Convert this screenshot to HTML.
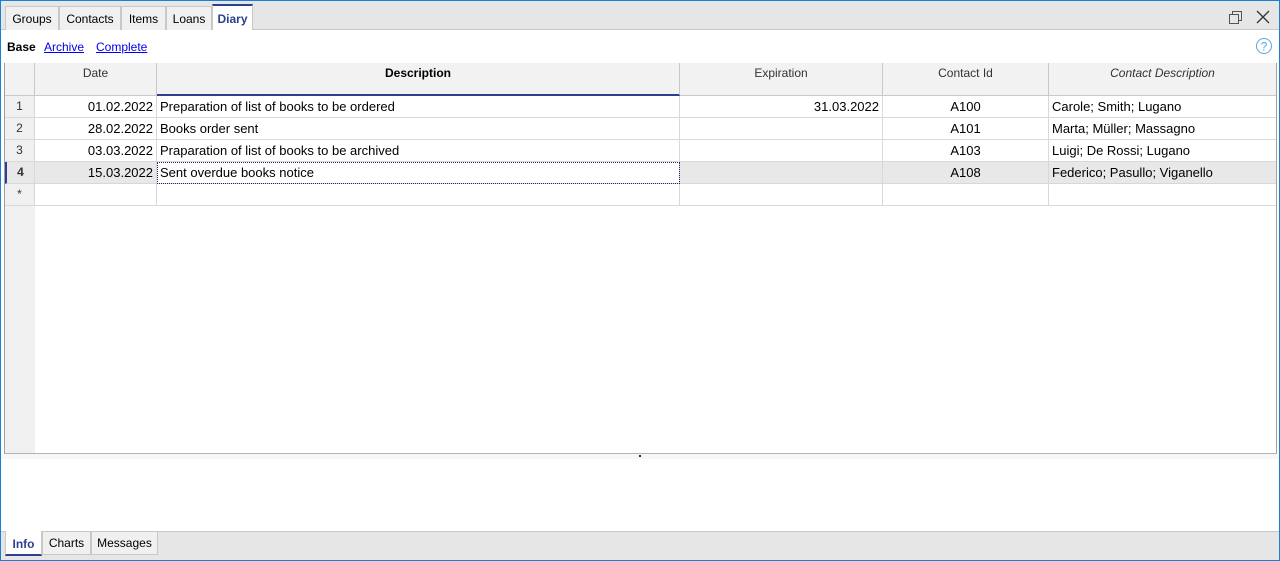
<!DOCTYPE html>
<html><head><meta charset="utf-8"><style>
*{margin:0;padding:0;box-sizing:border-box}
body{width:1280px;height:561px;overflow:hidden;background:#fff;font-family:"Liberation Sans",Arial,sans-serif;font-size:12px;color:#000;position:relative}
.a{position:absolute}
.frame{left:0;top:0;width:1280px;height:561px;border:1px solid #1a7fd6}
.tabbar{left:1px;top:1px;width:1278px;height:29px;background:#e6e6e6;border-bottom:1px solid #c8c8c8}
.tab{top:6px;height:24px;background:#f0f0f0;border:1px solid #c8c8c8;border-bottom:none;text-align:center;line-height:24px;font-size:12px}
.tab.act{background:#fff;top:4px;height:26px;border-top:2px solid #2e3f8f;color:#2e3f8f;font-weight:bold;line-height:26px}
.link{top:40px;color:#0000ee;text-decoration:underline}
.grid{left:4px;top:63px;width:1273px;height:391px;border:1px solid #a0a0a0;border-bottom:1px solid #b4b4b4}
.hd{top:63px;height:33px;background:#f2f2f2;border-right:1px solid #c8c8c8;border-bottom:1px solid #c8c8c8;text-align:center;padding-top:3px;color:#333}
.c{height:22px;line-height:21px;border-right:1px solid #d8d8d8;border-bottom:1px solid #d8d8d8;padding:0 3px;white-space:nowrap;overflow:hidden;font-size:13px}
.r{text-align:right}.m{text-align:center}
.num{background:#f0f0f0;text-align:center;color:#333;font-size:12px}
.btab{top:531px;height:24px;background:#f0f0f0;border:1px solid #c8c8c8;text-align:center;line-height:22px}
</style></head><body>
<div class="a tabbar"></div>
<div class="a tab" style="left:5px;width:54px">Groups</div>
<div class="a tab" style="left:59px;width:62px">Contacts</div>
<div class="a tab" style="left:121px;width:45px">Items</div>
<div class="a tab" style="left:166px;width:46px">Loans</div>
<div class="a tab act" style="left:212px;width:41px">Diary</div>
<svg class="a" style="left:1228px;top:10px" width="16" height="16"><rect x="4.5" y="1.5" width="9" height="9" fill="none" stroke="#555"/><rect x="1.5" y="4.5" width="9" height="9" fill="#e6e6e6" stroke="#555"/></svg>
<svg class="a" style="left:1256px;top:10px" width="14" height="14"><path d="M1 1L13 13M13 1L1 13" stroke="#333" stroke-width="1.3"/></svg>
<div class="a" style="left:7px;top:40px;font-weight:bold">Base</div>
<div class="a link" style="left:44px">Archive</div>
<div class="a link" style="left:96px">Complete</div>
<svg class="a" style="left:1255px;top:37px" width="18" height="18"><circle cx="9" cy="9" r="7.5" fill="none" stroke="#5aa6e0"/><text x="9" y="13.5" font-size="12" text-anchor="middle" fill="#5aa6e0" font-family="Liberation Sans">?</text></svg>

<div class="a grid"></div>
<div class="a" style="left:5px;top:96px;width:30px;height:357px;background:#f0f0f0"></div>
<div class="a hd" style="left:5px;width:30px"></div>
<div class="a hd" style="left:35px;width:122px">Date</div>
<div class="a hd" style="left:157px;width:523px;font-weight:bold;border-bottom:2px solid #2e3f8f;color:#000">Description</div>
<div class="a hd" style="left:680px;width:203px">Expiration</div>
<div class="a hd" style="left:883px;width:166px">Contact Id</div>
<div class="a hd" style="left:1049px;width:227px;font-style:italic;border-right:none">Contact Description</div>

<div class="a" style="left:5px;top:96px">
<div style="display:flex"><div class="c num" style="width:30px">1</div><div class="c r" style="width:122px">01.02.2022</div><div class="c" style="width:523px">Preparation of list of books to be ordered</div><div class="c r" style="width:203px">31.03.2022</div><div class="c m" style="width:166px">A100</div><div class="c" style="width:227px;border-right:none">Carole; Smith; Lugano</div></div>
<div style="display:flex"><div class="c num" style="width:30px">2</div><div class="c r" style="width:122px">28.02.2022</div><div class="c" style="width:523px">Books order sent</div><div class="c r" style="width:203px"></div><div class="c m" style="width:166px">A101</div><div class="c" style="width:227px;border-right:none">Marta; Müller; Massagno</div></div>
<div style="display:flex"><div class="c num" style="width:30px">3</div><div class="c r" style="width:122px">03.03.2022</div><div class="c" style="width:523px">Praparation of list of books to be archived</div><div class="c r" style="width:203px"></div><div class="c m" style="width:166px">A103</div><div class="c" style="width:227px;border-right:none">Luigi; De Rossi; Lugano</div></div>
<div style="display:flex;background:#e8e8e8"><div class="c num" style="width:30px;font-weight:bold;border-left:2px solid #2e3f8f;background:#e8e8e8">4</div><div class="c r" style="width:122px">15.03.2022</div><div class="c" style="width:523px;background:#fff;outline:1px dotted #1a2a6a;outline-offset:-1px">Sent overdue books notice</div><div class="c r" style="width:203px"></div><div class="c m" style="width:166px">A108</div><div class="c" style="width:227px;border-right:none">Federico; Pasullo; Viganello</div></div>
<div style="display:flex;background:#fff"><div class="c num" style="width:30px">*</div><div class="c" style="width:122px"></div><div class="c" style="width:523px"></div><div class="c" style="width:203px"></div><div class="c" style="width:166px"></div><div class="c" style="width:227px;border-right:none"></div></div>
</div>
<div class="a" style="left:1px;top:454px;width:1278px;height:5px;background:#f7f7f7"></div>
<div class="a" style="left:639px;top:455px;width:2px;height:2px;background:#333"></div>

<div class="a" style="left:1px;top:531px;width:1278px;height:29px;background:#e6e6e6;border-top:1px solid #c8c8c8"></div>
<div class="a btab" style="left:5px;width:37px;background:#fff;border-top:none;border-bottom:2px solid #2e3f8f;height:25px;color:#2e3f8f;font-weight:bold;line-height:26px">Info</div>
<div class="a btab" style="left:42px;width:49px">Charts</div>
<div class="a btab" style="left:91px;width:67px">Messages</div>
<div class="a frame"></div>
</body></html>
